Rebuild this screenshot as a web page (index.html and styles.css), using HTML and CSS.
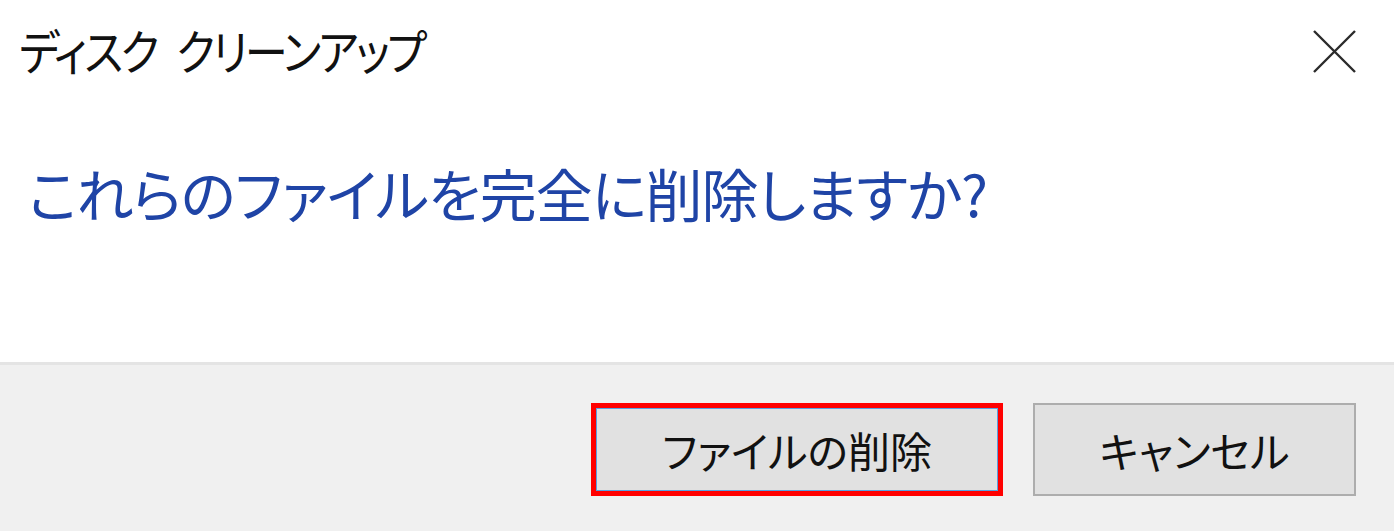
FILE: index.html
```html
<!DOCTYPE html>
<html lang="ja">
<head>
  <meta charset="UTF-8">
  <meta name="viewport" content="width=device-width, initial-scale=1.0">
  <title>ディスク クリーンアップ</title>
  <link rel="stylesheet" href="styles.css">
</head>
<body>
  <div class="dialog">
    <div class="dialog-main">
      <div class="title-bar">
        <h1 class="title">ディスク クリーンアップ</h1>
        <button class="close-btn" aria-label="閉じる">
          <svg width="43" height="43" viewBox="0 0 43 43">
            <path d="M1 1 L42 42 M42 1 L1 42" stroke="#2b2b2b" stroke-width="2.4" fill="none"/>
          </svg>
        </button>
      </div>
      <p class="message">これらのファイルを完全に削除しますか?</p>
    </div>
    <div class="dialog-footer">
      <div class="focus-ring">
        <button class="btn btn-default">ファイルの削除</button>
      </div>
      <button class="btn">キャンセル</button>
    </div>
  </div>
</body>
</html>
```

FILE: styles.css
```css
html, body {
  margin: 0;
  height: 100%;
}
body {
  font-family: "Noto Sans CJK JP", "Noto Sans", sans-serif;
  font-feature-settings: "palt";
  background: white;
}
.dialog {
  display: flex;
  flex-direction: column;
  height: 100%;
}
.dialog-main {
  height: 362px;
  background: white;
}
.title-bar {
  display: flex;
  justify-content: space-between;
  align-items: flex-start;
  padding: 20px 38px 0 19px;
}
.title {
  margin: -6px 0 0;
  font-size: 48px;
  font-weight: 400;
  line-height: 70px;
  letter-spacing: -3px;
  word-spacing: 14px;
  color: #111;
  transform: scaleX(0.9);
  transform-origin: left center;
}
.close-btn {
  border: none;
  background: none;
  padding: 0;
  margin-top: 10px;
  width: 43px;
  height: 43px;
}
.message {
  margin: 68px 0 0 28px;
  font-size: 57px;
  line-height: 80px;
  letter-spacing: -1px;
  color: #1f44a6;
}
.dialog-footer {
  flex: 1;
  display: flex;
  align-items: flex-start;
  justify-content: flex-end;
  gap: 30px;
  padding: 38px 38px 0 0;
  background: #f0f0f0;
  border-top: 3px solid #e4e4e4;
}
.focus-ring {
  border: 5px solid #ff0000;
}
.btn {
  font-family: inherit;
  font-feature-settings: "palt";
  font-size: 42px;
  color: #111;
  background: #e1e1e1;
  border: 2px solid #adadad;
  height: 93px;
  width: 323px;
  padding: 0;
}
.btn-default {
  display: block;
  width: 402px;
  height: 83px;
  border: 1px solid #5aa0e0;
}
```
